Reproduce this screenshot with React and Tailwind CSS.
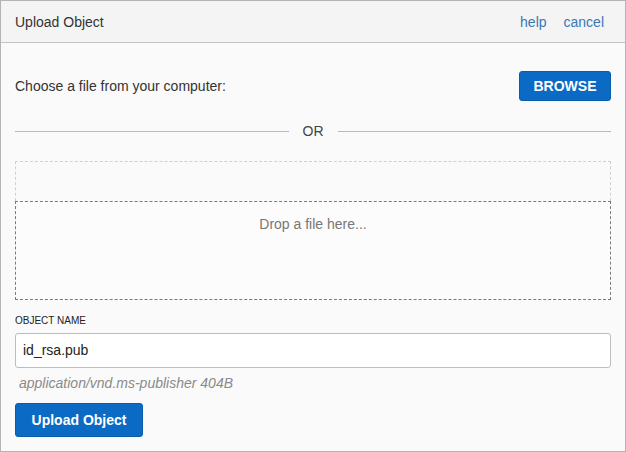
export default function App() {
  return (
    <div className="w-[626px] h-[452px] border border-[#b4b4b4] bg-[#fafafa] text-[#333] flex flex-col" style={{ fontFamily: '"Liberation Sans", Arial, sans-serif' }}>
      {/* Header */}
      <div className="h-[42px] shrink-0 flex items-center justify-between pl-[14px] pr-[21px] pt-[2px] bg-[#f4f4f4] border-b border-[#c4c4c4]">
        <span className="text-[14px] text-[#333]">Upload Object</span>
        <div className="flex items-center gap-[17px] text-[14px] text-[#3a78b5]">
          <span>help</span>
          <span>cancel</span>
        </div>
      </div>

      {/* Body */}
      <div className="px-[14px] pt-[28px] flex flex-col">
        <div className="flex items-center justify-between">
          <span className="text-[14px] text-[#333]">Choose a file from your computer:</span>
          <button className="w-[92px] h-[30px] rounded-[3px] bg-[#0b6ac4] border border-[#0a5cab] text-white text-[14px] font-bold">
            BROWSE
          </button>
        </div>

        <div className="mt-[20px] h-[20px] flex items-center">
          <div className="flex-1 h-px bg-[#b8b8b8]"></div>
          <span className="px-[14px] text-[14px] text-[#444]">OR</span>
          <div className="flex-1 h-px bg-[#b8b8b8]"></div>
        </div>

        <div className="mt-[20px] h-[40px] border-t border-x border-dashed border-[#d0d0d0]"></div>
        <div className="h-[99px] border border-dashed border-[#7a7a7a] bg-[#fcfcfc] flex justify-center pt-[12px]">
          <span className="text-[14px] text-[#777]">Drop a file here...</span>
        </div>

        <label className="mt-[14px] text-[10px] text-[#222] leading-[14px]">OBJECT NAME</label>
        <div className="mt-[5px] h-[35px] bg-white border border-[#bdbdbd] rounded-[3px] flex items-center px-[7px]">
          <span className="text-[14px] text-[#222]">id_rsa.pub</span>
        </div>
        <div className="mt-[6px] pl-[4px] text-[14px] italic text-[#8a8a8a] leading-[18px]">application/vnd.ms-publisher 404B</div>

        <div className="mt-[11px]">
          <button className="w-[128px] h-[34px] rounded-[3px] bg-[#0b6ac4] border border-[#0a5cab] text-white text-[14px] font-bold">
            Upload Object
          </button>
        </div>
      </div>
    </div>
  );
}
